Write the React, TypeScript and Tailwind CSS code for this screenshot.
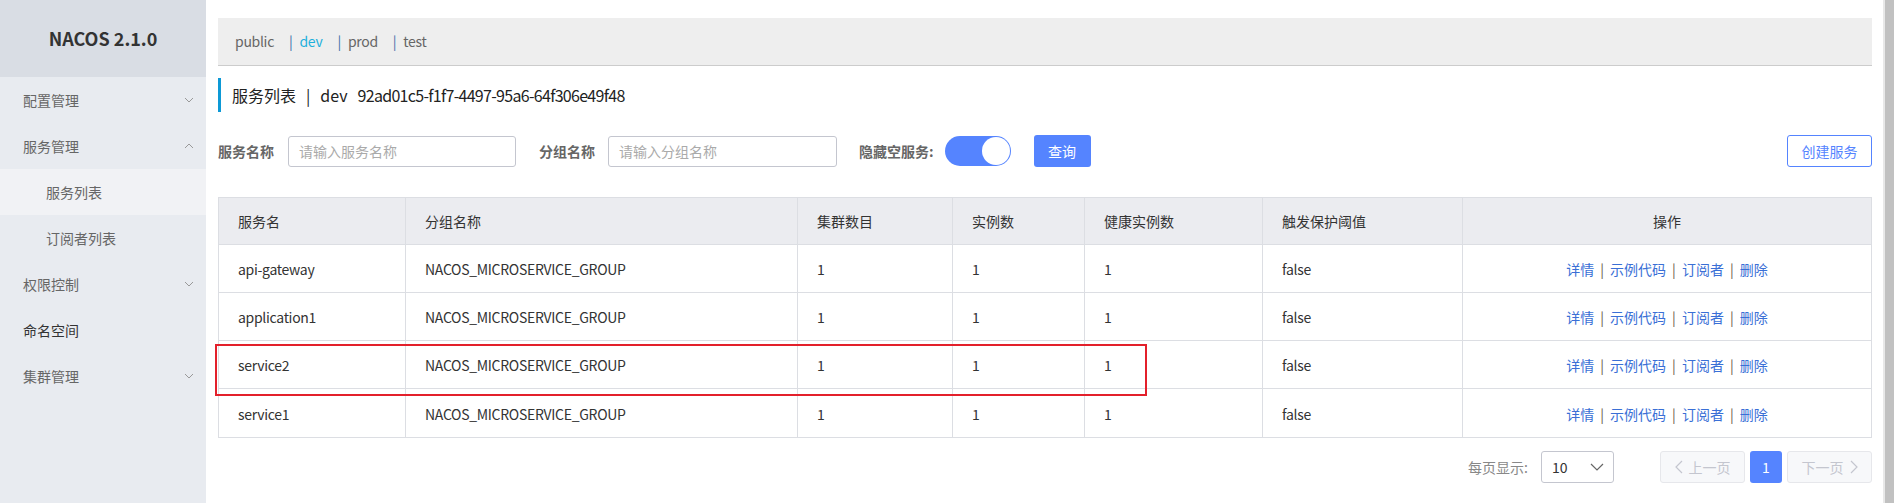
import React from "react";

const MENU = [
  { label: "配置管理", arrow: "down" },
  { label: "服务管理", arrow: "up" },
  { label: "服务列表", sub: true, active: true },
  { label: "订阅者列表", sub: true },
  { label: "权限控制", arrow: "down" },
  { label: "命名空间", dark: true },
  { label: "集群管理", arrow: "down" },
];

const COLS = [
  { title: "服务名", w: "w-[187px]" },
  { title: "分组名称", w: "w-[392px]" },
  { title: "集群数目", w: "w-[155px]" },
  { title: "实例数", w: "w-[132px]" },
  { title: "健康实例数", w: "w-[178px]" },
  { title: "触发保护阈值", w: "w-[200px]" },
];

const ROWS = ["api-gateway", "application1", "service2", "service1"];

function Chevron({ up }: { up?: boolean }) {
  return (
    <svg width="10" height="6" viewBox="0 0 10 6" className="text-[#999]">
      <polyline
        points={up ? "1,5 5,1 9,5" : "1,1 5,5 9,1"}
        fill="none"
        stroke="currentColor"
        strokeWidth="1"
      />
    </svg>
  );
}

function Sidebar() {
  return (
    <div className="w-[206px] shrink-0 bg-[#e8ebf0]">
      <div className="h-[77px] bg-[#d9dde4] flex items-center justify-center text-[18px] font-bold text-[#333]">
        NACOS 2.1.0
      </div>
      {MENU.map((m) => (
        <div
          key={m.label}
          className={`h-[46px] flex items-center justify-between pr-[12px] text-[14px] ${
            m.sub ? "pl-[46px]" : "pl-[23px]"
          } ${m.active ? "bg-[#f1f2f5]" : ""} ${m.dark ? "text-[#333]" : "text-[#666]"}`}
        >
          <span>{m.label}</span>
          {m.arrow && <Chevron up={m.arrow === "up"} />}
        </div>
      ))}
    </div>
  );
}

function Links() {
  const items = ["详情", "示例代码", "订阅者", "删除"];
  return (
    <div className="flex items-center justify-center text-[14px]">
      {items.map((t, i) => (
        <React.Fragment key={t}>
          {i > 0 && <span className="mx-[6px] text-[#6b5a48]">|</span>}
          <span className="text-[#3a6fd6]">{t}</span>
        </React.Fragment>
      ))}
    </div>
  );
}

export default function App() {
  return (
    <div className="flex h-[503px] w-full overflow-hidden bg-white font-['Noto_Sans_CJK_SC','Noto_Sans',sans-serif] text-[#333]">
      <Sidebar />

      <div className="flex-1 min-w-0 pl-[12px] pr-[11px]">
        {/* namespace bar */}
        <div className="mt-[18px] h-[48px] bg-[#eeeeee] border-b border-[#cccccc] flex items-center pl-[17px] text-[14px] text-[#666] tracking-[-0.3px]">
          <span className="mr-[15px]">public</span>
          <span className="text-[#3b6fa8] mr-[7px]">|</span>
          <span className="text-[#1fb0dc] mr-[15px]">dev</span>
          <span className="text-[#3b6fa8] mr-[7px]">|</span>
          <span className="mr-[15px]">prod</span>
          <span className="text-[#3b6fa8] mr-[7px]">|</span>
          <span>test</span>
        </div>

        {/* title */}
        <div className="mt-[12px] h-[34px] border-l-[3px] border-[#0d99d6] pl-[11px] flex items-center text-[16px] text-[#222]">
          <span>服务列表</span>
          <span className="mx-[10px]">|</span>
          <span className="mr-[10px]">dev</span>
          <span className="tracking-[-0.7px]">92ad01c5-f1f7-4497-95a6-64f306e49f48</span>
        </div>

        {/* filter row */}
        <div className="mt-[23px] h-[32px] flex items-center text-[14px]">
          <span className="font-bold text-[#666] mr-[14px]">服务名称</span>
          <div className="w-[228px] h-[31px] border border-[#c4c6cf] rounded-[3px] flex items-center pl-[10px] text-[#aaa]">
            请输入服务名称
          </div>
          <span className="font-bold text-[#666] ml-[23px] mr-[13px]">分组名称</span>
          <div className="w-[229px] h-[31px] border border-[#c4c6cf] rounded-[3px] flex items-center pl-[10px] text-[#aaa]">
            请输入分组名称
          </div>
          <span className="font-bold text-[#666] ml-[22px] mr-[11px]">隐藏空服务:</span>
          <div className="w-[66px] h-[30px] rounded-full bg-[#5584ff] flex items-center justify-end pr-[1px]">
            <div className="w-[28px] h-[28px] rounded-full bg-white" />
          </div>
          <div className="ml-[23px] w-[57px] h-[32px] rounded-[3px] bg-[#5584ff] text-white flex items-center justify-center">
            查询
          </div>
          <div className="ml-auto w-[85px] h-[32px] rounded-[3px] border border-[#5584ff] text-[#5584ff] flex items-center justify-center">
            创建服务
          </div>
        </div>

        {/* table */}
        <div className="relative mt-[30px]">
          <div className="border border-[#dcdee3] text-[14px]">
            <div className="flex h-[47px] bg-[#ebecf0] border-b border-[#dcdee3]">
              {COLS.map((c) => (
                <div key={c.title} className={`${c.w} shrink-0 border-r border-[#dcdee3] flex items-center pl-[19px]`}>
                  {c.title}
                </div>
              ))}
              <div className="flex-1 flex items-center justify-center">操作</div>
            </div>
            {ROWS.map((r, i) => (
              <div key={r} className={`flex h-[48px] ${i < ROWS.length - 1 ? "border-b border-[#dcdee3]" : ""}`}>
                {[r, "NACOS_MICROSERVICE_GROUP", "1", "1", "1", "false"].map((v, j) => (
                  <div
                    key={j}
                    className={`${COLS[j].w} shrink-0 border-r border-[#dcdee3] flex items-center pl-[19px] tracking-[-0.3px] pt-[2px]`}
                  >
                    {v}
                  </div>
                ))}
                <div className="flex-1 flex items-center justify-center pt-[2px]">
                  <Links />
                </div>
              </div>
            ))}
          </div>
          <div className="absolute left-[-3px] top-[147px] w-[932px] h-[52px] border-2 border-[#e3202b] pointer-events-none" />
        </div>

        {/* pagination */}
        <div className="mt-[13px] h-[32px] flex items-center justify-end text-[14px]">
          <span className="text-[#888] mr-[13px]">每页显示:</span>
          <div className="w-[73px] h-[32px] border border-[#c4c6cf] rounded-[3px] flex items-center justify-between pl-[10px] pr-[9px] text-[#333]">
            <span>10</span>
            <svg width="14" height="8" viewBox="0 0 14 8" className="text-[#666]">
              <polyline points="1,1 7,7 13,1" fill="none" stroke="currentColor" strokeWidth="1.2" />
            </svg>
          </div>
          <div className="ml-[46px] w-[85px] h-[32px] rounded-[3px] border border-[#e6e7eb] bg-[#f7f8fa] text-[#c4c6cf] flex items-center justify-center gap-[6px]">
            <svg width="8" height="14" viewBox="0 0 8 14">
              <polyline points="7,1 1,7 7,13" fill="none" stroke="#c4c6cf" strokeWidth="1.2" />
            </svg>
            <span>上一页</span>
          </div>
          <div className="ml-[5px] w-[32px] h-[32px] rounded-[3px] bg-[#5584ff] text-white flex items-center justify-center">
            1
          </div>
          <div className="ml-[5px] w-[85px] h-[32px] rounded-[3px] border border-[#e6e7eb] bg-[#f7f8fa] text-[#c4c6cf] flex items-center justify-center gap-[6px]">
            <span>下一页</span>
            <svg width="8" height="14" viewBox="0 0 8 14">
              <polyline points="1,1 7,7 1,13" fill="none" stroke="#c4c6cf" strokeWidth="1.2" />
            </svg>
          </div>
        </div>
      </div>

      {/* scrollbar */}
      <div className="w-[11px] shrink-0 border-l-2 border-[#e8e8e8] bg-[#c1c1c1]" />
    </div>
  );
}
